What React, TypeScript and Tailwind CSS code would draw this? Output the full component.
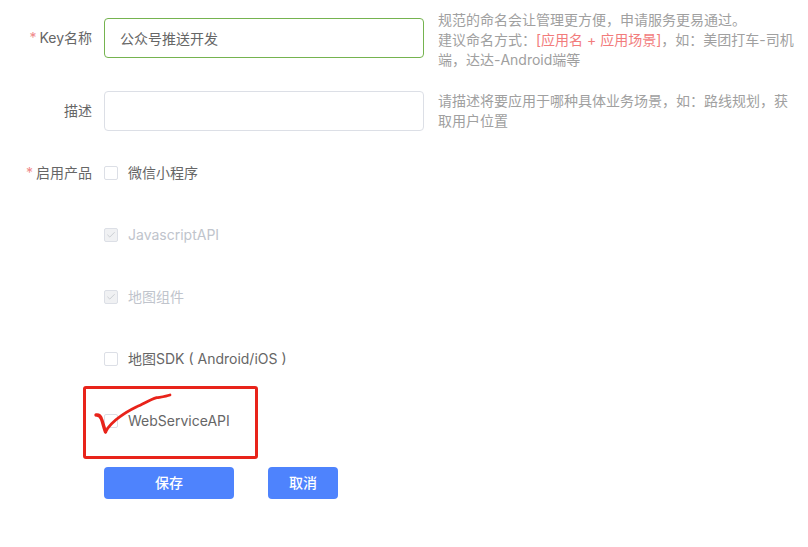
import React from 'react';
import { Check } from 'lucide-react';

const FONT = "font-['Inter','Noto_Sans_CJK_SC',sans-serif]";

interface CheckRowProps {
  label: string;
  checked?: boolean;
  disabled?: boolean;
  required?: boolean;
  title?: string;
}

function Star() {
  return <span className="mr-[3px] text-[#f08a8a]">*</span>;
}

function CheckRow({ label, checked, disabled, required, title }: CheckRowProps) {
  return (
    <div className="mb-[42px] flex h-5 items-center">
      <div className="mr-3 w-[92px] text-right text-sm text-[#666666]">
        {required && <Star />}
        {title}
      </div>
      <span
        className={`mr-[10px] flex h-[14px] w-[14px] items-center justify-center rounded-[2px] border border-[#dcdfe6] ${
          disabled ? 'bg-[#f0f1f3]' : 'bg-white'
        }`}
      >
        {checked && <Check size={10} strokeWidth={1.5} className="text-[#b4b8bf]" />}
      </span>
      <span className={`text-sm ${disabled ? 'text-[#c0c4cc]' : 'text-[#666666]'}`}>{label}</span>
    </div>
  );
}

export default function App() {
  return (
    <div className={`relative h-[547px] w-[808px] overflow-hidden bg-white pt-[18px] ${FONT}`}>
      <div className="mb-[33px] flex h-10 items-center">
        <div className="mr-3 w-[92px] text-right text-sm text-[#666666]">
          <Star />
          Key名称
        </div>
        <input
          readOnly
          value="公众号推送开发"
          className="h-10 w-80 rounded-[4px] border border-[#75b34f] bg-white px-[15px] text-sm text-[#666666] outline-none"
        />
        <p className="ml-[14px] -mt-[8px] w-[358px] self-start text-sm leading-5 text-[#a0a0a0]">
          规范的命名会让管理更方便，申请服务更易通过。
          <br />
          建议命名方式：<span className="text-[#f27c7c]">[应用名 + 应用场景]</span>，如：美团打车-司机端，达达-Android端等
        </p>
      </div>

      <div className="mb-8 flex h-10 items-center">
        <div className="mr-3 w-[92px] text-right text-sm text-[#666666]">描述</div>
        <input readOnly className="h-10 w-80 rounded-[4px] border border-[#dcdfe6] bg-white outline-none" />
        <p className="ml-[14px] w-[358px] text-sm leading-5 text-[#a0a0a0]">
          请描述将要应用于哪种具体业务场景，如：路线规划，获取用户位置
        </p>
      </div>

      <CheckRow required title="启用产品" label="微信小程序" />
      <CheckRow disabled checked label="JavascriptAPI" />
      <CheckRow disabled checked label="地图组件" />
      <CheckRow label="地图SDK ( Android/iOS )" />
      <div className="-mb-[6px]">
        <CheckRow label="WebServiceAPI" />
      </div>

      <div className="ml-[104px] flex gap-[34px]">
        <button type="button" className="h-8 w-[130px] rounded-[4px] bg-[#4e83fd] text-sm font-medium text-white">
          保存
        </button>
        <button type="button" className="h-8 w-[70px] rounded-[4px] bg-[#4e83fd] text-sm font-medium text-white">
          取消
        </button>
      </div>

      {/* red annotation drawn over the form */}
      <div className="absolute left-[83px] top-[386px] h-[73px] w-[175px] rounded-[3px] border-[3px] border-[#e8231a]" />
      <svg className="absolute left-[90px] top-[388px]" width="90" height="50" viewBox="90 388 90 50" fill="none">
        <path
          d="M96 415 C99 414.5 100.5 416 101.5 419 C103 423 104 428 105.5 432"
          stroke="#e8231a"
          strokeWidth="3.4"
          strokeLinecap="round"
        />
        <path
          d="M105.5 432 C109 425 114 421 120 416.7 C126 412 131 409.5 136.7 406.7 C143 404.5 149 400 156.7 397.7 C161 397 166 396.5 170 395"
          stroke="#e8231a"
          strokeWidth="2.8"
          strokeLinecap="round"
        />
      </svg>
    </div>
  );
}
